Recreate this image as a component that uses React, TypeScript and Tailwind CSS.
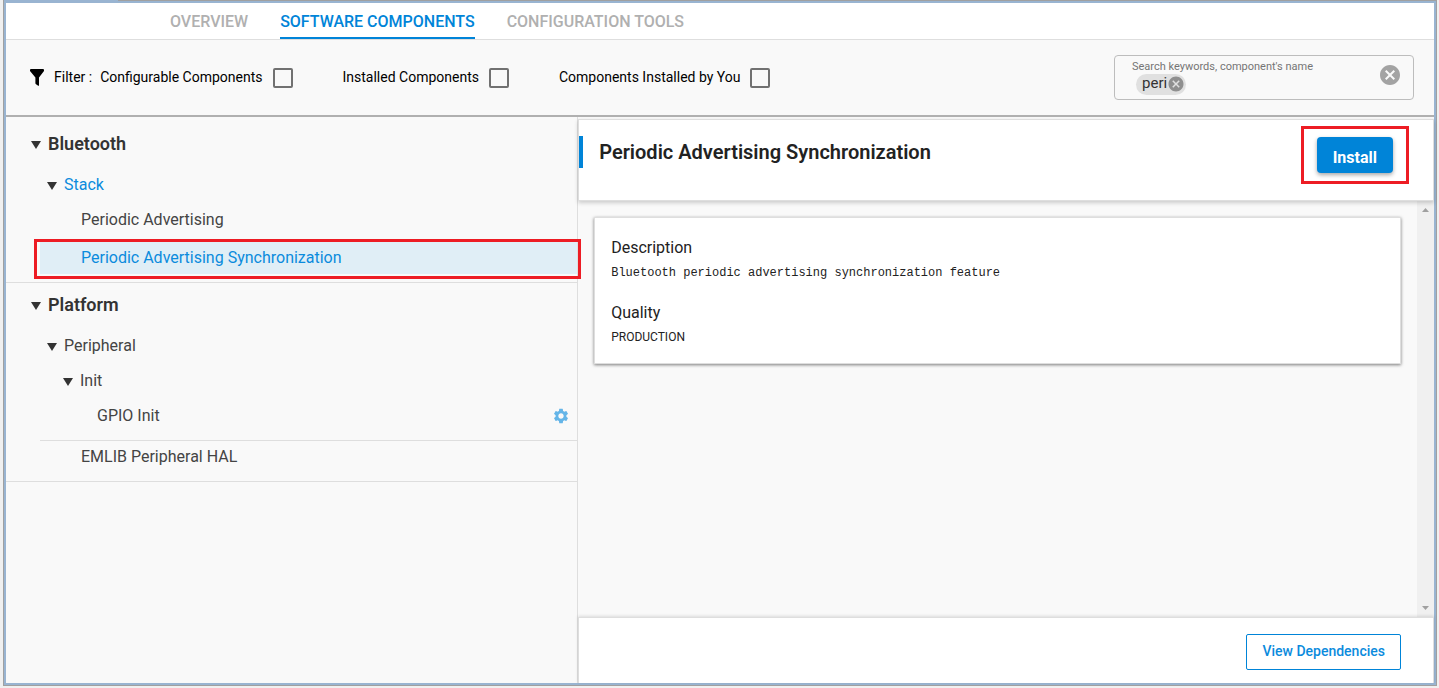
import { useState, type ReactNode } from "react";
import { MdCancel, MdSettings } from "react-icons/md";

function Caret() {
  return (
    <svg viewBox="0 0 10 8" className="h-2 w-2.5 shrink-0 translate-y-px fill-[#333]" aria-hidden="true">
      <path d="M0 0h10L5 8z" />
    </svg>
  );
}

function Funnel() {
  return (
    <svg viewBox="0 0 14 17" className="h-[17px] w-3.5" aria-hidden="true">
      <path d="M1 0h12q1 0 1 1v1L9 8.5V16.2q0 .8-.8.5L6 15.2q-.6-.4-.6-1V8.500L0 2V1q0-1 1-1z" />
    </svg>
  );
}

function Tab({ label, active = false }: { label: string; active?: boolean }) {
  return (
    <a
      href="#"
      className={
        active
          ? "flex items-center border-b-2 border-[#0084d8] pt-1 text-[#0084d8]"
          : "flex items-center border-b-2 border-transparent pt-1 text-[#b0b0b0]"
      }
    >
      {label}
    </a>
  );
}

function FilterOption({ id, label }: { id: string; label: string }) {
  return (
    <div className="flex items-center gap-2.5">
      <label htmlFor={id} className="pb-0.5">
        {label}
      </label>
      <input
        id={id}
        type="checkbox"
        className="size-5 appearance-none rounded-xs border-2 border-[#717171] checked:bg-[#0084d8]"
      />
    </div>
  );
}

function Section({ title, children }: { title: string; children: ReactNode }) {
  return (
    <section className="border-b border-[#dedede] pt-1 pb-2">
      <button className="mb-[5px] flex h-9 w-full items-center gap-[7px] pl-[25px] text-lg font-semibold text-[#333]">
        <Caret />
        {title}
      </button>
      {children}
    </section>
  );
}

function Branch({ label, active = false, nested = false }: { label: string; active?: boolean; nested?: boolean }) {
  return (
    <button className={`flex h-[35px] w-full items-center gap-[7px] ${nested ? "pl-[57px]" : "pl-[41px]"}`}>
      <Caret />
      <span className={active ? "text-[#0b8bdd]" : "text-[#444]"}>{label}</span>
    </button>
  );
}

export default function App() {
  const [keyword, setKeyword] = useState("");

  return (
    <div className="flex h-screen flex-col bg-[#f0f0f0] pr-[2px] pb-[2px] pl-[3px] font-['Roboto',sans-serif] text-base text-[#222]">
      <div className="relative flex min-h-0 flex-1 border border-[#a0a0a0]">
        <span className="absolute -top-px left-0 h-px w-[114px] bg-[#99b4d1]" />
        <div className="flex min-w-0 flex-1 flex-col border-2 border-[#99b4d1] bg-[#f9f9f9]">
          <nav className="flex h-[37px] shrink-0 gap-8 border-b border-[#dedede] bg-white pl-[164px] font-medium">
            <Tab label="OVERVIEW" />
            <Tab label="SOFTWARE COMPONENTS" active />
            <Tab label="CONFIGURATION TOOLS" />
          </nav>

          <header className="flex h-[77px] shrink-0 items-center justify-between border-b-2 border-[#b0b0b0] pr-5 pl-6 text-sm text-black">
            <div className="flex items-center">
              <Funnel />
              <span className="mr-2 ml-2.5 pb-0.5">Filter :</span>
              <div className="flex items-center gap-[50px]">
                <FilterOption id="configurable" label="Configurable Components" />
                <FilterOption id="installed" label="Installed Components" />
                <FilterOption id="by-you" label="Components Installed by You" />
              </div>
            </div>
            <div className="flex h-[45px] w-[300px] items-center rounded-sm border border-[#bdbdbd] pr-[11px] pl-[17px]">
              <div className="min-w-0 flex-1 pb-px">
                <label htmlFor="search" className="block text-[11px] leading-[14px] text-[#757575]">
                  Search keywords, component's name
                </label>
                <div className="flex pl-1">
                  <span className="flex h-[21px] shrink-0 items-center rounded-full bg-[#e0e0e0] pr-px pl-[6px] text-[15px] text-[#333]">
                    peri
                    <button aria-label="Remove peri" className="text-[#8f8f8f]">
                      <MdCancel size={18} />
                    </button>
                  </span>
                  <input
                    id="search"
                    value={keyword}
                    onChange={(e) => setKeyword(e.target.value)}
                    className="min-w-0 flex-1 bg-transparent pl-2 outline-none"
                  />
                </div>
              </div>
              <button aria-label="Clear search" className="pb-1.5 text-[#a3a3a3]">
                <MdCancel size={24} />
              </button>
            </div>
          </header>

          <div className="flex min-h-0 flex-1">
            <aside className="w-2/5 pt-[5px] text-[#444]">
              <Section title="Bluetooth">
                <Branch label="Stack" active />
                <a href="#" className="flex h-[35px] items-center pl-[75px]">
                  Periodic Advertising
                </a>
                <a
                  href="#"
                  className="relative mt-[3px] ml-[34px] flex h-[34px] items-center bg-[#e0eef6] pt-0.5 pl-[41px] text-[#0b8bdd]"
                >
                  Periodic Advertising Synchronization
                  <span className="absolute -top-px -right-1 -bottom-[5px] -left-1.5 z-10 border-3 border-[#ed1c24]" />
                </a>
              </Section>
              <Section title="Platform">
                <Branch label="Peripheral" />
                <Branch label="Init" nested />
                <div className="ml-[34px] border-b border-[#dedede] pb-[7px]">
                  <div className="flex h-[35px] items-center justify-between pr-[7px] pl-[57px]">
                    <a href="#">GPIO Init</a>
                    <button aria-label="Configure GPIO Init" className="text-[#64b5e8]">
                      <MdSettings size={18} />
                    </button>
                  </div>
                </div>
                <a href="#" className="flex h-8 items-center pl-[75px]">
                  EMLIB Peripheral HAL
                </a>
              </Section>
            </aside>

            <main className="flex min-w-0 flex-1 flex-col border-l border-[#dedede] pt-0.5">
              <div className="z-[1] flex h-[82px] shrink-0 items-start justify-between border border-[#dedede] bg-white pt-4 pr-10 shadow-[0_2px_4px_rgba(0,0,0,0.18)]">
                <h1 className="flex h-8 items-center border-l-4 border-[#0084d8] pl-4 text-xl font-semibold">
                  Periodic Advertising Synchronization
                </h1>
                <div className="relative">
                  <button className="mt-px flex h-9 items-center rounded-sm bg-[#0084d8] px-4 pt-1.5 font-bold text-white shadow-[0_2px_4px_rgba(0,0,0,0.35)]">
                    Install
                  </button>
                  <span className="pointer-events-none absolute -inset-x-4 -top-2.5 -bottom-[11px] border-3 border-[#ed1c24]" />
                </div>
              </div>

              <div className="flex min-h-0 flex-1">
                <div className="min-w-0 flex-1 p-4">
                  <article className="border border-[#dedede] bg-white px-4 pt-[18px] pb-4 shadow-[0_1px_3px_rgba(0,0,0,0.5)]">
                    <h2 className="leading-6">Description</h2>
                    <p className="mt-[3px] mb-[18px] font-['Liberation_Mono',monospace] text-xs leading-5">
                      Bluetooth periodic advertising synchronization feature
                    </p>
                    <h2 className="leading-6">Quality</h2>
                    <p className="mt-0.5 text-xs leading-5">PRODUCTION</p>
                  </article>
                </div>
                <div className="flex w-[17px] flex-col items-center justify-between bg-[#f0f0f0] py-[7px]">
                  <svg viewBox="0 0 7 4" className="h-1 w-[7px] fill-[#a0a0a0]" aria-hidden="true">
                    <path d="M0 4h7L3.500 0z" />
                  </svg>
                  <svg viewBox="0 0 7 4" className="h-1 w-[7px] fill-[#a0a0a0]" aria-hidden="true">
                    <path d="M0 0h7L3.500 4z" />
                  </svg>
                </div>
              </div>

              <footer className="flex h-[66px] shrink-0 items-center justify-end border border-b-0 border-[#dedede] bg-white pt-0.5 pr-8 shadow-[0_-1px_3px_rgba(0,0,0,0.12)]">
                <button className="h-9 rounded-xs border border-[#0084d8] px-[15px] pb-0.5 text-sm font-medium text-[#0b8bdd]">
                  View Dependencies
                </button>
              </footer>
            </main>
          </div>
        </div>
      </div>
    </div>
  );
}
